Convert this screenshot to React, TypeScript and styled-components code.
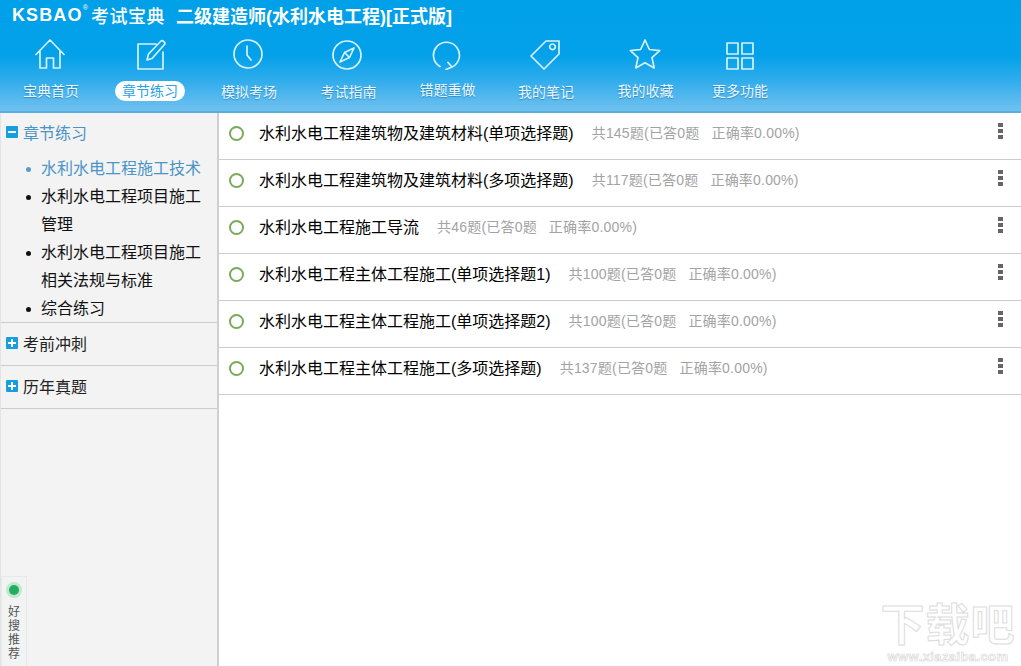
import React from 'react';
import styled, { createGlobalStyle } from 'styled-components';

const Global = createGlobalStyle`
  html, body { margin: 0; padding: 0; height: 100%; background: #fff; overflow: hidden; }
  #root { height: 100%; }
  * { box-sizing: border-box; }
`;
const FONT = `"Liberation Sans", "Noto Sans CJK SC", sans-serif`;

const Page = styled.div`
  position: relative; width: 1021px; height: 666px; display: flex; flex-direction: column;
  font-family: ${FONT}; overflow: hidden;
`;
const Header = styled.header`
  height: 113px; flex: none; padding-left: 1px;
  background: linear-gradient(180deg, #00a0e9 0%, #03a1e9 50%, #2facec 72%, #6cc0ef 98%);
  border-bottom: 2px solid #58aee0;
`;
const TitleBar = styled.div`
  height: 30px; display: flex; align-items: center; color: #fff; padding-left: 11px; white-space: nowrap;
`;
const Brand = styled.span`
  font-size: 18px; font-weight: 700; letter-spacing: 1.1px; position: relative; width: 79px; flex: none;
`;
const Reg = styled.span`
  position: absolute; top: -1px; right: 2px; font-size: 7px; font-weight: 400;
`;
const BrandCn = styled.span`
  font-size: 18px; width: 74px; flex: none; letter-spacing: 0.5px; font-weight: 500;
`;
const Title = styled.span`
  font-size: 18px; font-weight: 700; margin-left: 11px;
`;
const Nav = styled.nav`
  display: flex;
`;
const NavItem = styled.div<{ $w: number }>`
  width: ${p => p.$w}px; display: flex; flex-direction: column; align-items: center; padding-top: 6px;
`;
const IconSlot = styled.div<{ $dx?: number; $dy?: number }>`
  width: 36px; height: 36px; display: flex; align-items: center; justify-content: center;
  transform: translate(${p => p.$dx || 0}px, ${p => p.$dy || 0}px);
  svg { fill: none; stroke: #d9f1fc; stroke-width: 1.7; stroke-linecap: round; stroke-linejoin: round; }
`;
const NavLabel = styled.div<{ $on?: boolean; $dy?: number }>`
  margin-top: ${p => 9 + (p.$dy || 0)}px; height: 20px; line-height: 20px; font-size: 14px; white-space: nowrap;
  width: ${p => (p.$on ? '70px' : 'auto')}; text-align: center;
  color: ${p => (p.$on ? '#2aa3df' : '#eaf7fe')};
  background: ${p => (p.$on ? '#fff' : 'transparent')};
  border-radius: 10px;
  text-shadow: ${p => (p.$on ? 'none' : '0 1px 1px rgba(0,80,140,0.45)')};
`;
const Body = styled.div`
  flex: 1; display: flex; min-height: 0;
`;
const Sidebar = styled.aside`
  width: 219px; flex: none; background: #f3f3f3; border-right: 2px solid #cfcfcf; border-left: 1px solid #e4e4e4;
`;
const Section = styled.div`
  border-bottom: 1px solid #ccc;
`;
const SectionHead = styled.div<{ $on?: boolean }>`
  height: 42px; display: flex; align-items: center; gap: 5px; padding: 0 0 ${p => (p.$on ? '4px' : '2px')} 5px;
  font-size: 16px; color: ${p => (p.$on ? '#4a94c6' : '#222')};
`;
const Toggle = styled.span`
  width: 12px; height: 12px; background: #14a0e0; position: relative; flex: none; border-radius: 1px;
  &::before { content: ''; position: absolute; left: 2px; right: 2px; top: 5px; height: 2px; background: #fff; }
`;
const TogglePlus = styled(Toggle)`
  &::after { content: ''; position: absolute; top: 2px; bottom: 2px; left: 5px; width: 2px; background: #fff; }
`;
const SubList = styled.ul`
  list-style: none; margin: 0 0 -1px; padding: 0 14px 0 40px;
`;
const SubItem = styled.li<{ $on?: boolean }>`
  position: relative; font-size: 16px; line-height: 28px; color: ${p => (p.$on ? '#4a94c6' : '#111')};
  &::before {
    content: ''; position: absolute; left: -15px; top: 12px; width: 5px; height: 5px; border-radius: 50%;
    background: ${p => (p.$on ? '#5b9cc9' : '#111')};
  }
`;
const Main = styled.main`
  flex: 1; min-width: 0; background: #fff;
`;
const Row = styled.div`
  height: 47px; border-bottom: 1px solid #ccc; display: flex; align-items: center; padding: 0 0 8px 10px; position: relative;
`;
const Ring = styled.span`
  width: 15px; height: 15px; border-radius: 50%; border: 2px solid #7aa95c; flex: none; margin: 2px 15px 0 0;
`;
const RowName = styled.span`
  font-size: 16px; color: #000; white-space: nowrap;
`;
const RowMeta = styled.span`
  font-size: 14px; color: #a3a3a3; margin-left: 18px; white-space: nowrap; letter-spacing: 0.2px;
`;
const Accuracy = styled.span`
  margin-left: 12px;
`;
const Dots = styled.span`
  position: absolute; right: 18px; top: 10px; display: flex; flex-direction: column; gap: 2px;
  i { display: block; width: 5px; height: 4px; background: #666; }
`;
const HaoSou = styled.div`
  position: absolute; left: 1px; bottom: 0; width: 26px; height: 90px; background: #f1f4f3;
  border: 1px solid #e6eaea; border-bottom: 0; display: flex; flex-direction: column; align-items: center; padding-top: 6px;
`;
const Lamp = styled.span`
  width: 10px; height: 10px; background: #23ad62; border-radius: 50%; box-shadow: 0 0 0 3px #bfe8cd;
  margin: 2px 0 10px; flex: none;
`;
const HaoText = styled.span`
  font-size: 12px; line-height: 14px; width: 12px; color: #555; text-align: center;
`;
const Watermark = styled.div`
  position: absolute; right: 5px; bottom: 3px; width: 136px; text-align: center; pointer-events: none;
`;
const WmBig = styled.div`
  font-size: 44px; line-height: 48px; font-weight: 700; white-space: nowrap; letter-spacing: 1px;
  color: #fff; -webkit-text-stroke: 1px #dcdcdc;
`;
const WmSmall = styled.div`
  font-size: 13px; line-height: 13px; font-weight: 700; color: #fff; -webkit-text-stroke: 0.6px #d4d4d4; letter-spacing: 0.4px;
`;

const I = ({ children, w = 32, h = 32 }: { children: React.ReactNode; w?: number; h?: number }) => (
  <svg width={w} height={h} viewBox="0 0 32 32">{children}</svg>
);

const navs: { label: string; w: number; on?: boolean; dy?: number; ix?: number; iy?: number; icon: React.ReactNode }[] = [
  { label: '宝典首页', w: 100, ix: -1, icon: <I><path d="M2 16.500 16 2l14 14.500M6 13.500V30h6.500V20h7v10H26V13.500" /></I> },
  { label: '章节练习', w: 98, on: true, ix: 1, icon: <I><path d="M21 6H3v25h25V14M12 22l1.500-6L26 3c1.500-1.500 5 1.800 3.500 3.500L17 20.500z" /></I> },
  { label: '模拟考场', w: 100, dy: 1, ix: -1, icon: <I><circle cx="16" cy="16" r="14" /><path d="M15 8v9l4 5" /></I> },
  { label: '考试指南', w: 99, dy: 1, ix: -2, iy: 1, icon: <I><circle cx="16" cy="16" r="14" /><path d="M23 9l-4.500 9.500L9 23l4.500-9.500zM13.500 13.500l5 5" /></I> },
  { label: '错题重做', w: 99, dy: -1, ix: -1, icon: <I><path d="M9 28.500A13 13 0 1 1 21 29M15 31.500 21 29l-4-4.500" /></I> },
  { label: '我的笔记', w: 98, dy: 1, ix: -1, icon: <I><path d="M17 3h13v13L15 31 2 18zM23.500 6a2.800 2.800 0 1 0 .01 0z" /></I> },
  { label: '我的收藏', w: 101, ix: -1, icon: <I><path d="M16 2l4.400 9.500 10.300 1.200-7.700 7 2.200 10.200L16 24.700l-9.200 5.200L9 19.700l-7.700-7 10.300-1.200z" /></I> },
  { label: '更多功能', w: 88, iy: 2, icon: <I><path d="M3 3h11v11H3zM18 3h11v11H18zM3 18h11v11H3zM18 18h11v11H18z" /></I> },
];

const rows = [
  ['水利水电工程建筑物及建筑材料(单项选择题)', '145'],
  ['水利水电工程建筑物及建筑材料(多项选择题)', '117'],
  ['水利水电工程施工导流', '46'],
  ['水利水电工程主体工程施工(单项选择题1)', '100'],
  ['水利水电工程主体工程施工(单项选择题2)', '100'],
  ['水利水电工程主体工程施工(多项选择题)', '137'],
];

export default function App() {
  return (
    <Page>
      <Global />
      <Header>
        <TitleBar>
          <Brand>KSBAO<Reg>®</Reg></Brand>
          <BrandCn>考试宝典</BrandCn>
          <Title>二级建造师(水利水电工程)[正式版]</Title>
        </TitleBar>
        <Nav>
          {navs.map(n => (
            <NavItem key={n.label} $w={n.w}>
              <IconSlot $dx={n.ix} $dy={n.iy}>{n.icon}</IconSlot>
              <NavLabel $on={n.on} $dy={n.dy}>{n.label}</NavLabel>
            </NavItem>
          ))}
        </Nav>
      </Header>
      <Body>
        <Sidebar>
          <Section>
            <SectionHead $on><Toggle />章节练习</SectionHead>
            <SubList>
              <SubItem $on>水利水电工程施工技术</SubItem>
              <SubItem>水利水电工程项目施工管理</SubItem>
              <SubItem>水利水电工程项目施工相关法规与标准</SubItem>
              <SubItem>综合练习</SubItem>
            </SubList>
          </Section>
          <Section><SectionHead><TogglePlus />考前冲刺</SectionHead></Section>
          <Section><SectionHead><TogglePlus />历年真题</SectionHead></Section>
        </Sidebar>
        <Main>
          {rows.map(([name, n]) => (
            <Row key={name}>
              <Ring />
              <RowName>{name}</RowName>
              <RowMeta>共{n}题(已答0题<Accuracy>正确率0.00%)</Accuracy></RowMeta>
              <Dots><i /><i /><i /></Dots>
            </Row>
          ))}
        </Main>
      </Body>
      <HaoSou>
        <Lamp />
        <HaoText>好搜推荐</HaoText>
      </HaoSou>
      <Watermark>
        <WmBig>下载吧</WmBig>
        <WmSmall>www.xiazaiba.com</WmSmall>
      </Watermark>
    </Page>
  );
}
